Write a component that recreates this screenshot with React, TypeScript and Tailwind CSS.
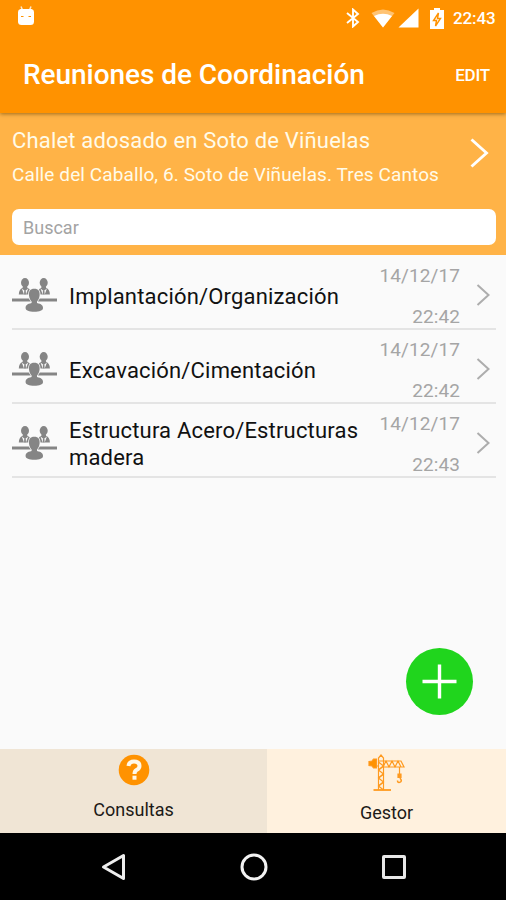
import type { ReactNode } from 'react';

interface Meeting {
  title: string;
  date: string;
  time: string;
}

const meetings: Meeting[] = [
  { title: 'Implantación/Organización', date: '14/12/17', time: '22:42' },
  { title: 'Excavación/Cimentación', date: '14/12/17', time: '22:42' },
  { title: 'Estructura Acero/Estructuras madera', date: '14/12/17', time: '22:43' },
];

function StatusBar() {
  return (
    <div className="flex h-9 items-center pl-[17px] pr-[10px] text-white">
      <svg width="18" height="20" viewBox="0 0 18 20" className="mb-[5px]">
        <path d="M4 0.500L5.500 4M14 0.500L12.500 4" stroke="#fff" strokeOpacity="0.8" strokeWidth="1.500" />
        <path d="M3.500 3H14.500Q17 3.500 17 6V15.500Q17 19 13.500 19H4.500Q1 19 1 15.500V6Q1 3.500 3.500 3Z" fill="#fff" />
        <path d="M4 10.500H6.500M11.500 10.500H14" stroke="#ff9200" strokeWidth="1.200" />
      </svg>
      <svg width="14" height="20" viewBox="0 0 14 20" className="ml-auto">
        <path d="M1 5L12 14L7 18.500V1.500L12 6L1 15" fill="none" stroke="#fff" strokeWidth="1.900" />
      </svg>
      <svg width="24" height="19" viewBox="0 0 24 19" className="ml-[11px]">
        <path d="M0.500 4Q12-3 23.500 4L12 18.500Z" fill="#fff" fillOpacity="0.45" />
        <path d="M3 7Q12 2.500 21 7L12 18.500Z" fill="#fff" />
      </svg>
      <svg width="21" height="20" viewBox="0 0 21 20" className="ml-[3px]">
        <path d="M0.500 19.500L20.500 0.500V19.500Z" fill="#fff" />
      </svg>
      <svg width="14" height="21" viewBox="0 0 14 21" className="ml-[11px]">
        <path d="M4 0H10V2H14V21H0V2H4Z" fill="#fff" />
        <path d="M8.500 5L3.500 12.500H6.500L5.500 18L10.500 10.500H7.500Z" fill="none" stroke="#ff9200" strokeWidth="1.400" />
      </svg>
      <span className="ml-[9px] w-[43px] whitespace-nowrap text-[17px] font-medium leading-5 tracking-[-0.1px]">22:43</span>
    </div>
  );
}

function MeetingIcon() {
  return (
    <svg width="45" height="34" viewBox="0 0 45 34" fill="#858585" className="mt-[6px] shrink-0">
      {[13, 31.7].map((x) => (
        <g key={x} transform={`translate(${x} 0)`}>
          <ellipse cx="0" cy="4.700" rx="4" ry="4.700" />
          <path d="M-2 8H2L2.500 10Q6 11 6.200 16.500H-6.200Q-6 11-2.500 10Z" />
          <path d="M-3.200 10.500L-1 16.500H1L3.200 10.500L0 13Z" fill="#fafafa" />
          <path d="M-0.700 12.500H0.700L1 16.500H-1Z" />
        </g>
      ))}
      <path d="M0 20.500H45V23.500H0Z" />
      <path
        d="M22.300 10.800C26.500 10.800 28 13.500 27.600 17.500C27.300 20.500 26 22.500 25 23.500V25C29.500 26 31 27.500 31 30C31 32.500 27.500 33.700 22.300 33.700S13.600 32.500 13.600 30C13.600 27.500 15.100 26 19.600 25V23.500C18.600 22.500 17.300 20.500 17 17.500C16.600 13.500 18.100 10.800 22.300 10.800Z"
        stroke="#fafafa"
        strokeWidth="1.600"
        paintOrder="stroke"
      />
    </svg>
  );
}

function MeetingRow({ title, date, time }: Meeting) {
  return (
    <li className="flex h-[74px] items-center border-b-2 border-[#e4e4e4]">
      <MeetingIcon />
      <p className="ml-3 w-[300px] pt-2 text-[22px] leading-[27px] tracking-[0.18px] text-[#111]">{title}</p>
      <div className="ml-auto flex h-full flex-col items-end justify-between pt-2 text-[19px] leading-6 tracking-[0.1px] text-[#a5a5a5]">
        <span>{date}</span>
        <span className="-mb-px">{time}</span>
      </div>
      <svg width="14" height="22" viewBox="0 0 14 22" className="ml-4 mr-[6px] mt-[5px]">
        <path d="M1.500 1L12.500 11L1.500 21" fill="none" stroke="#adadad" strokeWidth="2" />
      </svg>
    </li>
  );
}

function Tab({ label, className, children }: { label: string; className: string; children: ReactNode }) {
  return (
    <button className={`flex flex-col items-center ${className}`}>
      {children}
      <span className="text-[18px] leading-6 text-[#1c1a17]">{label}</span>
    </button>
  );
}

function CraneIcon() {
  return (
    <svg width="38" height="37" viewBox="0 0 38 37" fill="none" stroke="#ff9a1f" strokeWidth="1.200" className="mt-[5px]">
      <path d="M10.500 36V4L13 1L15.500 4V36M10.500 8L15.500 12L10.500 16L15.500 20L10.500 24L15.500 28L10.500 32L15.500 36" />
      <path d="M15.500 12L10.500 16M15.500 20L10.500 24M15.500 28L10.500 32" />
      <path d="M5.500 36H23" strokeWidth="1.800" />
      <path d="M10 7H33L36 13H15M15 13L18 7L21 13L24 7L27 13L30 7L33 13M10 12H5" />
      <path d="M1 7.500L4 7L5.500 5H8.500V14H5.500L4 12L1 11.500Z" fill="#ff9200" />
      <path d="M31.500 13V21" />
      <path d="M30 20H33V23.500H30Z" fill="#ff9a1f" />
      <path d="M32 24Q35 28 31 28.500Q29.500 28.500 29.500 26.500" strokeWidth="1.500" />
    </svg>
  );
}

export default function App() {
  return (
    <div className="flex h-[900px] w-[506px] flex-col overflow-hidden bg-[#fafafa] font-['Roboto',sans-serif]">
      <header className="relative h-[113px] shrink-0 bg-[#ff9200] text-white shadow-[0_1px_4px_rgba(90,60,0,0.6)]">
        <StatusBar />
        <div className="flex h-[77px] items-center justify-between pl-[23px] pr-4">
          <h1 className="whitespace-nowrap text-[28px] font-medium leading-8 tracking-[-0.05px]">Reuniones de Coordinación</h1>
          <button className="text-[17px] font-medium leading-5 tracking-[-0.2px]">EDIT</button>
        </div>
      </header>

      <section className="h-[142px] shrink-0 bg-[#ffb347] px-3 pt-[13px] text-[#fffbe9]">
        <div className="flex h-[83px] justify-between">
          <div className="whitespace-nowrap">
            <h2 className="text-[22px] leading-[30px] tracking-[0.18px]">Chalet adosado en Soto de Viñuelas</h2>
            <p className="mt-[6px] text-[19px] leading-[26px] tracking-[0.1px]">Calle del Caballo, 6. Soto de Viñuelas. Tres Cantos</p>
          </div>
          <svg width="19" height="30" viewBox="0 0 19 30" className="mr-[5px] mt-3">
            <path d="M1.500 1.500L16.500 15L1.500 28.500" fill="none" stroke="#fff" strokeWidth="2.900" />
          </svg>
        </div>
        <input
          type="text"
          placeholder="Buscar"
          className="block h-[36px] w-[484px] rounded-[7px] bg-white px-[11px] text-[18px] placeholder:text-[#a3a3a3]"
        />
      </section>

      <main className="flex flex-1 flex-col">
        <ul className="ml-3 mr-[10px] mt-px">
          {meetings.map((meeting) => (
            <MeetingRow key={meeting.title} {...meeting} />
          ))}
        </ul>
        <button className="mb-[34px] ml-auto mr-[33px] mt-auto flex size-[67px] items-center justify-center rounded-full bg-[#20d51d]">
          <svg width="35" height="35" viewBox="0 0 35 35">
            <path d="M17.500 0.500V34.500M0.500 17.500H34.500" stroke="#fff" strokeWidth="3.400" />
          </svg>
        </button>
      </main>

      <nav className="flex h-[84px] shrink-0">
        <Tab label="Consultas" className="w-[267px] bg-[#f0e5d5]">
          <svg width="32" height="32" viewBox="0 0 32 32" className="mb-3 mt-[5px]">
            <circle cx="16" cy="16" r="15.300" fill="#ff9200" />
            <path d="M10.500 12Q11 7.500 16 7.500Q21.500 7.500 21.500 12Q21.500 14.500 18.500 16Q16.500 17.200 16.500 20" fill="none" stroke="#fff8e8" strokeWidth="4" />
            <path d="M14.500 21.700H18.500V25.700H14.500Z" fill="#fff8e8" />
          </svg>
        </Tab>
        <Tab label="Gestor" className="flex-1 bg-[#fff1de] [&>span]:mt-[10px]">
          <CraneIcon />
        </Tab>
      </nav>

      <footer className="flex h-[67px] shrink-0 items-center bg-black pl-[101px]">
        <svg width="25" height="28" viewBox="0 0 25 28" fill="none" stroke="#eee" strokeWidth="3">
          <path d="M22.500 2.500V25.500L2.500 14Z" strokeLinejoin="round" />
        </svg>
        <svg width="28" height="28" viewBox="0 0 28 28" fill="none" stroke="#f2f2f2" strokeWidth="3" className="ml-[114px]">
          <circle cx="14" cy="14" r="12" />
        </svg>
        <svg width="26" height="26" viewBox="0 0 26 26" fill="none" stroke="#e8e8e8" strokeWidth="3" className="ml-[113px]">
          <rect x="2.500" y="2.500" width="21" height="21" rx="0.500" />
        </svg>
      </footer>
    </div>
  );
}
